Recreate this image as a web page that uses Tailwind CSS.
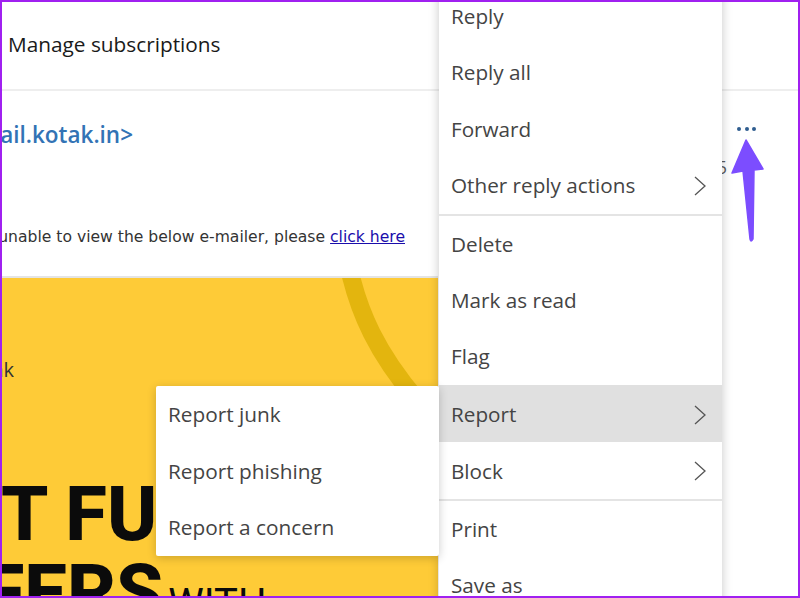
<!DOCTYPE html>
<html lang="en">
<head>
    <meta charset="UTF-8">
    <meta name="viewport" content="width=device-width, initial-scale=1.0">
    <title>Report message</title>
    <script src="https://cdn.jsdelivr.net/npm/@tailwindcss/browser@4"></script>
</head>
<body class="bg-white">
    <div class="relative w-[800px] h-[598px] overflow-hidden bg-white font-['Open_Sans',sans-serif]">

        <!-- mail behind the menus -->
        <div class="flex flex-col h-full">
            <div class="flex items-center h-[91px] pl-[8px] pt-[1px] border-b-2 border-[#eeeeee] text-[20.8px] text-[#1a1a1a]">Manage subscriptions</div>

            <div class="flex h-[93px] shrink-0">
                <div class="w-[437px] pt-[29px] pl-[2px] overflow-hidden">
                    <div class="w-[131px] flex justify-end overflow-hidden whitespace-nowrap text-[22.5px] leading-[30px] font-semibold text-[#3273b5]">mail.kotak.in&gt;</div>
                </div>
                <div class="flex-1 flex justify-end pt-[34px] pr-[44px] gap-[3.5px]">
                    <span class="w-[4px] h-[4px] mt-[2px] rounded-full bg-[#2f5d8f]"></span>
                    <span class="w-[4px] h-[4px] mt-[2px] rounded-full bg-[#2f5d8f]"></span>
                    <span class="w-[4px] h-[4px] mt-[2px] rounded-full bg-[#2f5d8f]"></span>
                </div>
            </div>

            <div class="h-[92px] shrink-0 pt-[43px] w-[405px] flex justify-end overflow-hidden whitespace-nowrap font-['DejaVu_Sans',sans-serif] text-[15.6px] leading-[20px] text-[#333333]">
                <span>unable to view the below e-mailer, please <a href="#" class="text-[#1a0dab] underline">click here</a></span>
            </div>

            <div class="relative w-[438px] flex-1 overflow-hidden border-t-2 border-[#e4e4e4] border-l-2 border-l-[#a020f0] bg-[#fecb37] font-['Roboto',sans-serif] text-[#0b0b0b]">
                <svg class="absolute left-0 top-0" width="436" height="320" viewBox="0 0 436 320" fill="none">
                    <path d="M347 -10 C 357 35 375 75 415 122" stroke="#e3b50e" stroke-width="18"/>
                </svg>
                <div class="w-[12px] mt-[80px] flex justify-end overflow-hidden text-[20px] leading-[24px] text-[#333333] font-['Open_Sans',sans-serif]">nk</div>
                <div class="mt-[94px] -ml-[1px] whitespace-nowrap text-[76px] leading-[76px] font-extrabold">T FU</div>
                <div class="flex items-end w-[300px] -ml-[61px] mt-[2px] whitespace-nowrap">
                    <span class="text-[76px] leading-[76px] font-extrabold">FFERS</span>
                    <span class="text-[40px] leading-[52px] ml-[5px]">WITH</span>
                </div>
            </div>
        </div>

        <!-- main menu -->
        <div class="absolute left-[439px] top-[-10.5px] w-[283px] bg-white shadow-[0_0_10px_rgba(0,0,0,0.22)] text-[20.7px] text-[#444444]">
            <div class="flex items-center justify-between h-[56px] pl-[12px] pr-[15.5px] pb-[1px]">Reply</div>
            <div class="flex items-center justify-between h-[56px] pl-[12px] pr-[15.5px] pb-[1px]">Reply all</div>
            <div class="flex items-center justify-between h-[56px] pl-[12px] pr-[15.5px]">Forward</div>
            <div class="flex items-center justify-between h-[56px] pl-[12px] pr-[15.5px]">Other reply actions
                <svg width="14" height="20" viewBox="0 0 14 20" fill="none" stroke="#555555" stroke-width="1.3"><path d="M2 1l10 9-10 9"/></svg>
            </div>
            <div class="h-[2px] bg-[#e4e4e4]"></div>
            <div class="flex items-center justify-between h-[56.5px] pl-[12px] pr-[15.5px] pt-[1px]">Delete</div>
            <div class="flex items-center justify-between h-[56.5px] pl-[12px] pr-[15.5px]">Mark as read</div>
            <div class="flex items-center justify-between h-[56.5px] pl-[12px] pr-[15.5px]">Flag</div>
            <div class="flex items-center justify-between h-[57px] pl-[12px] pr-[15.5px] pt-[2px] bg-[#e0e0e0]">Report
                <svg width="14" height="20" viewBox="0 0 14 20" fill="none" stroke="#555555" stroke-width="1.3"><path d="M2 1l10 9-10 9"/></svg>
            </div>
            <div class="flex items-center justify-between h-[56.5px] pl-[12px] pr-[15.5px] pt-[2px]">Block
                <svg width="14" height="20" viewBox="0 0 14 20" fill="none" stroke="#555555" stroke-width="1.3"><path d="M2 1l10 9-10 9"/></svg>
            </div>
            <div class="h-[2px] bg-[#e4e4e4]"></div>
            <div class="flex items-center justify-between h-[57px] pl-[12px] pr-[15.5px] pt-[1px]">Print</div>
            <div class="flex items-center justify-between h-[56.5px] pl-[12px] pr-[15.5px]">Save as</div>
        </div>

        <!-- report submenu -->
        <div class="absolute left-[156px] top-[386px] w-[283px] h-[170px] rounded-[2px] bg-white shadow-[0_2px_10px_rgba(0,0,0,0.2)] text-[20.8px] text-[#444444]">
            <div class="flex items-center h-[56.5px] pl-[12px]">Report junk</div>
            <div class="flex items-center h-[56.5px] pl-[12px] pt-[1px]">Report phishing</div>
            <div class="flex items-center h-[56.5px] pl-[12px]">Report a concern</div>
        </div>

        <!-- time, mostly under the menu -->
        <div class="absolute left-[722px] top-[155px] w-[5px] flex justify-end overflow-hidden text-[18px] leading-[24px] text-[#555555]">5</div>

        <!-- annotation arrow -->
        <svg class="absolute left-[725px] top-[135px]" width="45" height="112" viewBox="0 0 45 112" fill="#7c4dff">
            <path d="M21 5 L38 34 L29 35 L28 104 Q26 108 25 104 L18 36 L7 38 Z" stroke="#7c4dff" stroke-width="1.5" stroke-linejoin="round"/>
        </svg>

        <!-- screenshot frame -->
        <div class="absolute inset-0 border-2 border-[#a020f0] pointer-events-none"></div>
    </div>
</body>
</html>
